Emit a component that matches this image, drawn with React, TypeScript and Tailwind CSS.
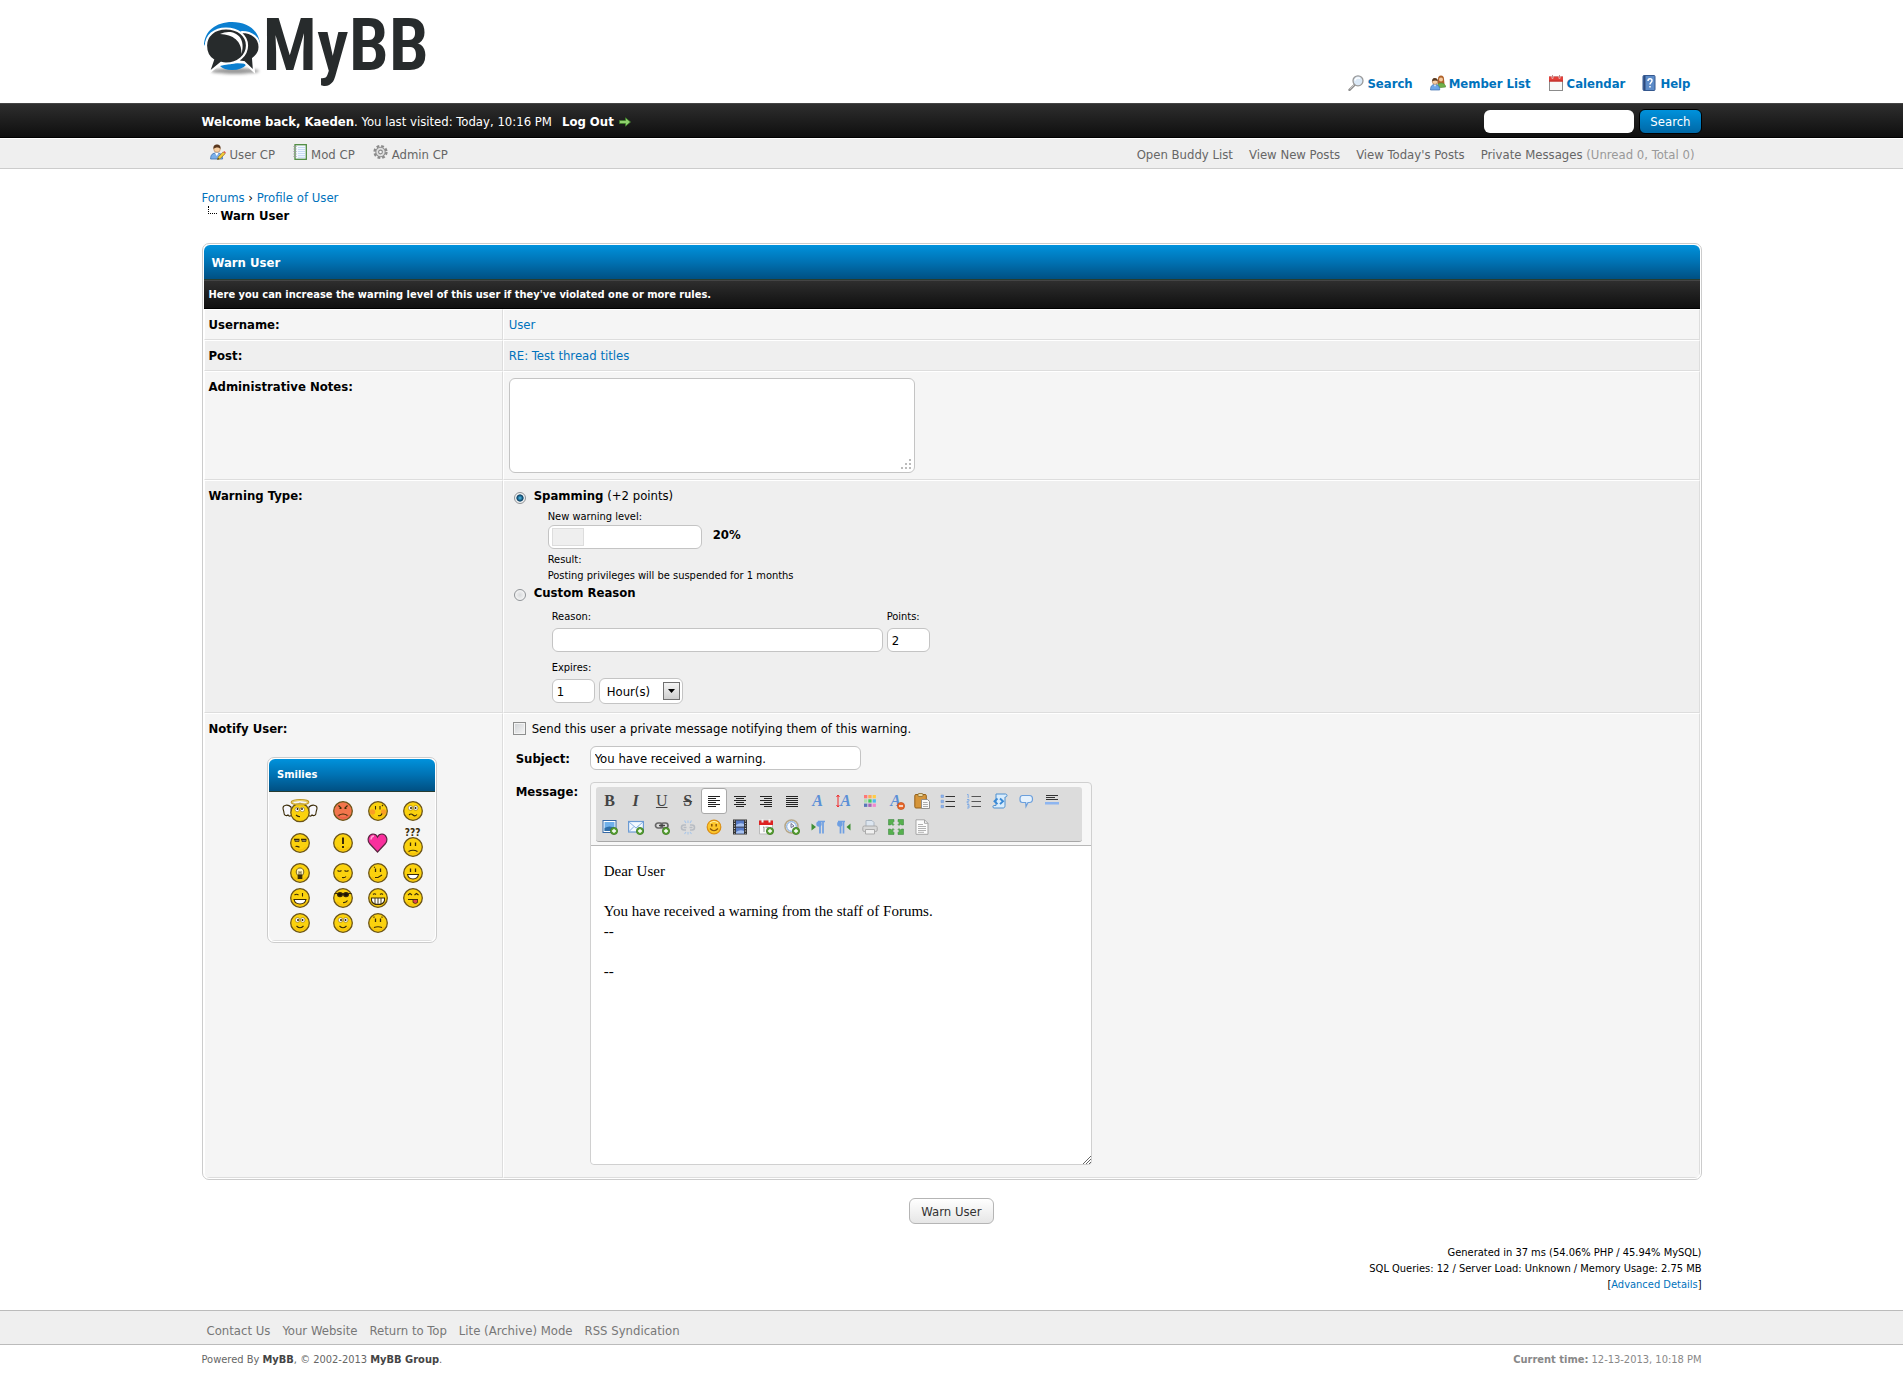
import React from 'react';
import type { ReactNode } from 'react';

const wrap = 'mx-auto w-[85%] max-w-[1500px]';
const inputBox = 'rounded-[6px] border border-[#c4c4c4] bg-white text-[13px] leading-[17px] text-black outline-none';

/* ---------- site logo ---------- */

function Logo() {
  return (
    <a href="#home" className="flex h-[75px] items-start text-[#272b2c]">
      <svg width="61" height="75" viewBox="7 0 61 75" aria-hidden="true">
        <defs>
          <filter id="soft" x="-20%" y="-100%" width="140%" height="300%">
            <feGaussianBlur stdDeviation="1.6" />
          </filter>
        </defs>
        <ellipse cx="40" cy="61" rx="24" ry="3" fill="#777" opacity=".75" filter="url(#soft)" />
        <path d="M9 36C9 21 21 12 37 12s28 9 28 24c-4-9-12-15-28-15S13 27 9 36z" fill="#0b7fd0" />
        <path d="M25 56q12-4 27-2-5 6-15 6-8 0-12-4z" fill="#0b7fd0" />
        <path d="M47 22c10 0 17.500 6 17.500 15 0 5-3 9-6.500 11.500l1 13-10-9.500c-5 0-9-3-12-7z" fill="#272b2c" stroke="#fff" strokeWidth="2" />
        <path d="M31 18.500c12 0 21 7 21 17S43 53.500 31 53.500c-2 0-3.500-.2-5-.6L13.500 63 18 50c-4.500-3-7-8-7-14.500C11 26 19 18.500 31 18.500z" fill="#272b2c" stroke="#fff" strokeWidth="2.200" />
        <path d="M25 24C37 18 52 25 46.500 44 47 31 38 24.500 25 24z" fill="#fff" />
      </svg>
      <span className="font-['Roboto_Condensed','Roboto',sans-serif] text-[72px] font-semibold leading-[72px]">MyBB</span>
    </a>
  );
}

/* ---------- small page icons ---------- */

function SearchIcon() {
  return (
    <svg width="16" height="16" viewBox="0 0 16 16" aria-hidden="true">
      <path d="M7 9.500L1.500 14.800" stroke="#8d8d8d" strokeWidth="2.400" strokeLinecap="round" />
      <path d="M6.500 9.500L1.800 14" stroke="#ddd" strokeWidth=".8" />
      <circle cx="10" cy="5.800" r="5" fill="#dbe9f7" stroke="#9a9a9a" strokeWidth="1.300" />
      <path d="M7 5.500A3.200 3.200 0 0 1 12 3.500" stroke="#fff" strokeWidth="1.400" fill="none" />
    </svg>
  );
}

function MembersIcon() {
  return (
    <svg width="16" height="16" viewBox="0 0 16 16" aria-hidden="true">
      <path d="M8 4a3 3.500 0 0 1 6 0l.5 5H7.500z" fill="#b0622a" />
      <circle cx="11" cy="4.500" r="2" fill="#f3c9a0" />
      <path d="M7 13c0-3.500 1.500-5 4-5s4.500 1.500 4.700 4z" fill="#6fb04a" stroke="#4f8a35" strokeWidth=".6" />
      <path d="M.5 15c0-4 1.500-5.500 4.500-5.500s4.700 1.500 4.700 5.500z" fill="#6ba5e7" stroke="#3c6fae" strokeWidth=".7" />
      <circle cx="5" cy="6.700" r="2.700" fill="#f6cfa5" stroke="#9a6234" strokeWidth=".5" />
      <path d="M2.200 6.500C2 3.500 3.500 3 5 3s3 .7 2.800 3.500C6.500 5 4 5 2.200 6.500z" fill="#5b3a20" />
      <path d="M4 9.700h2l-1 2z" fill="#fff" />
    </svg>
  );
}

function CalendarIcon() {
  return (
    <svg width="16" height="16" viewBox="0 0 16 16" aria-hidden="true">
      <rect x="1.500" y="2" width="13" height="13.500" fill="#f7f7f7" stroke="#8b8b8b" />
      <path d="M1 1.500h14v5H1z" fill="#e2403a" />
      <path d="M1 5.500h14v1H1z" fill="#b52a26" />
      <path d="M4.500 0v3.500M11.500 0v3.500" stroke="#fff" strokeWidth="1.600" />
      <path d="M4.500 0v3M11.500 0v3" stroke="#a55" strokeWidth=".7" />
    </svg>
  );
}

function HelpIcon() {
  return (
    <svg width="14" height="16" viewBox="0 0 14 16" aria-hidden="true">
      <rect x="1" y=".5" width="12" height="15" rx="1" fill="#5c8bc8" stroke="#35588f" />
      <path d="M2.500 1v14" stroke="#2d4a7c" strokeWidth="2" />
      <path d="M6 6c0-3 4-3 4-.5C10 7.500 8 7.500 8 9.500M8 11v1.500" stroke="#fff" strokeWidth="1.500" fill="none" />
    </svg>
  );
}

function UserEditIcon() {
  return (
    <svg width="16" height="16" viewBox="0 0 16 16" aria-hidden="true">
      <path d="M.6 15c0-4.500 2-6 6-6s6 1.500 6 6z" fill="#79aee8" stroke="#4073b0" strokeWidth=".8" />
      <path d="M5 9h3.500l-1.700 3z" fill="#fff" />
      <circle cx="7" cy="5" r="3.300" fill="#f7cfa2" stroke="#a4713f" strokeWidth=".5" />
      <path d="M3.500 5C3 1.500 5 .6 7 .6S11 1.500 10.500 5C9 3 5.500 3 3.500 5z" fill="#59371d" />
      <path d="M7.500 15.500l.8-2.600 5-5 1.800 1.800-5 5z" fill="#f6cf3b" stroke="#8f6b12" strokeWidth=".7" />
      <path d="M13.300 7.900l1-.9 1.600 1.600-.9 1z" fill="#e2574c" />
      <path d="M7.500 15.500l.5-1.500 1.200 1z" fill="#222" />
    </svg>
  );
}

function NotebookIcon() {
  return (
    <svg width="14" height="16" viewBox="0 0 14 16" aria-hidden="true">
      <rect x="2" y=".7" width="11.300" height="14.600" fill="#f3f8ff" stroke="#4d8a3e" strokeWidth="1.300" />
      <path d="M5 3.500h7M5 5.500h7M5 7.500h7M5 9.500h7M5 11.500h7M5 13.300h7" stroke="#bcd3f0" strokeWidth=".8" />
      <path d="M.5 2.500h3M.5 5h3M.5 7.500h3M.5 10h3M.5 12.500h3" stroke="#999" />
    </svg>
  );
}

function GearIcon() {
  return (
    <svg width="15" height="16" viewBox="0 0 16 16" aria-hidden="true">
      <circle cx="8" cy="8" r="6.300" fill="none" stroke="#8a8a8a" strokeWidth="2.600" strokeDasharray="2.900 2.050" />
      <circle cx="8" cy="8" r="5" fill="#e0e0e0" stroke="#8f8f8f" strokeWidth="1.100" />
      <circle cx="8" cy="8" r="2" fill="#f5f5f5" stroke="#8a8a8a" strokeWidth="1.200" />
    </svg>
  );
}

/* ---------- smilies ---------- */

const ink = '#3b2c08';

function Face({ children, angry }: { children?: ReactNode; angry?: boolean }) {
  return (
    <svg width="20" height="20" viewBox="0 0 20 20" fill="none" stroke={ink} strokeWidth="1.100" aria-hidden="true">
      <circle cx="10" cy="10" r="9.300" fill={angry ? '#f2764c' : '#fbd20e'} stroke="#6b5418" strokeWidth="1.300" />
      <path d="M4 14a7.500 7.500 0 0 0 12 0" stroke={angry ? '#e85246' : '#f3b80a'} strokeWidth="1.600" opacity=".6" />
      {children}
    </svg>
  );
}

const dots = <path d="M7.500 5.500v3.500M12.500 5.500v3.500" strokeWidth="1.300" />;

function Eyes() {
  return (
    <g>
      <circle cx="7.500" cy="7" r="2.300" fill="#fff" stroke="#6b5418" strokeWidth=".5" />
      <circle cx="12.700" cy="7" r="2.300" fill="#fff" stroke="#6b5418" strokeWidth=".5" />
      <path d="M8 6v2M12.500 6v2" strokeWidth="1.600" />
    </g>
  );
}

const smilies: { name: string; art: ReactNode }[] = [
  {
    name: 'Angel',
    art: (
      <svg width="36" height="24" viewBox="0 0 36 24" fill="none" stroke={ink} strokeWidth="1.100" aria-hidden="true">
        <path d="M9 8C6 5 1 6 1 9c0 2 1 3 1 5 0 3 3 3 4 2 1 2 4 1 4-1zM27 8c3-3 8-2 8 1 0 2-1 3-1 5 0 3-3 3-4 2-1 2-4 1-4-1z" fill="#f7f7fb" />
        <circle cx="18" cy="13.500" r="9.200" fill="#fbd20e" stroke="#6b5418" strokeWidth="1.300" />
        <ellipse cx="18" cy="3.200" rx="8.500" ry="2.200" stroke="#b8941e" strokeWidth="1.800" />
        <ellipse cx="18" cy="3.200" rx="8" ry="1.800" stroke="#fbe27a" strokeWidth=".8" />
        <circle cx="15.200" cy="10.500" r="2.200" fill="#fff" stroke="#6b5418" strokeWidth=".5" />
        <circle cx="20.300" cy="10.500" r="2.200" fill="#fff" stroke="#6b5418" strokeWidth=".5" />
        <path d="M15.500 9v2M20 9v2" strokeWidth="1.500" />
        <path d="M14 16q2 2 4 1.500" />
      </svg>
    ),
  },
  { name: 'Angry', art: <Face angry><path d="M5.500 4.500l3 3M14.500 4.500l-3 3M6.500 7.500h1.500M12 7.500h1.500M5.500 14.500Q10 11.500 14.500 14.500" /></Face> },
  {
    name: 'Blush',
    art: (
      <Face>
        <circle cx="4.500" cy="11" r="2.700" fill="#f9882f" opacity=".7" stroke="none" />
        <circle cx="15.500" cy="11" r="2.700" fill="#f9882f" opacity=".7" stroke="none" />
        <path d="M7.500 5v3.500M12 5v3.500M10 14.500q3 1 4-2M14 4l1 1" />
      </Face>
    ),
  },
  { name: 'Confused', art: <Face><Eyes /><path d="M6 14q2-2 4 0t4-.5" /></Face> },
  { name: 'Dodgy', art: <Face><path d="M4 6.500h5.500M11 6.500h5.500" strokeWidth="1.400" /><path d="M5 7.200h4v1.300H5zM12 7.200h4v1.300h-4z" fill="#fff" strokeWidth=".8" /><path d="M5.500 13.500q2-.5 4 .8" /></Face> },
  { name: 'Exclamation', art: <Face><path d="M10 4.500V11M10 13v2" strokeWidth="2" /></Face> },
  {
    name: 'Heart',
    art: (
      <svg width="21" height="20" viewBox="0 0 21 20" aria-hidden="true">
        <path d="M10.500 19L2.500 10.500C-.5 6.500 2 1 6 1c2.500 0 3.800 1.300 4.500 3C11.200 2.300 12.500 1 15 1c4 0 6.500 5.500 3.500 9.500z" fill="#f92f9d" stroke="#5b2540" strokeWidth="1.200" />
        <path d="M4 6.500C4.300 4 5.500 3 7 3" stroke="#ffa5d5" strokeWidth="1.500" fill="none" />
      </svg>
    ),
  },
  {
    name: 'Huh',
    art: (
      <span className="flex flex-col items-center">
        <span className="h-[9px] font-['DejaVu_Sans_Condensed',sans-serif] text-[10px] font-bold leading-[9px] text-[#3b2c08]">???</span>
        <Face>{dots}<path d="M5.500 14.500Q10 12 14.500 14.500" /></Face>
      </span>
    ),
  },
  {
    name: 'Idea',
    art: (
      <Face>
        <path d="M8 12.500C5 10 6 5 10 5s5 5 2 7.500z" fill="#fff6c0" strokeWidth=".7" />
        <path d="M8.200 12h3.600v3.500H8.200z" fill={ink} />
        <path d="M9 12V8.500l1 1 1-1V12" strokeWidth=".7" />
      </Face>
    ),
  },
  { name: 'Sleepy', art: <Face><path d="M4.500 7.500q2 1.500 4 0M11.500 7.500q2 1.500 4 0M9 14.500q3 .5 4-1" /></Face> },
  { name: 'Undecided', art: <Face>{dots}<path d="M6 4.500l1-.5M7 14.500h3l4-2.500" /></Face> },
  { name: 'Smile', art: <Face>{dots}<path d="M4.500 11.500h11q-1 4.500-5.500 4.500t-5.500-4.500z" fill="#fff" /></Face> },
  { name: 'Wink', art: <Face><path d="M4.500 7q2-1.500 4 0M12.500 5v3.500" /><path d="M4 11.500h12q-1 4.500-6 4.500t-6-4.500z" fill="#fff" /></Face> },
  { name: 'Cool', art: <Face><path d="M1.500 5.500h17" /><ellipse cx="7" cy="6.600" rx="2.500" ry="2" fill="#1b1405" /><ellipse cx="13" cy="6.600" rx="2.500" ry="2" fill="#1b1405" /><path d="M10 14.500q3 .5 4.500-2" /></Face> },
  { name: 'Big grin', art: <Face><path d="M5 6.500q1.500-1.500 3 0M12 6.500q1.500-1.500 3 0" /><path d="M3.500 10h13v2.500q-1 4-6.500 4t-6.500-4z" fill="#fff" /><path d="M7 10v5.500M10 10v6M13 10v5.500" strokeWidth=".9" /></Face> },
  { name: 'Tongue', art: <Face><path d="M5 7l2-1.500L9 7M11.500 7l2-1.500 2 1.500M5 11.500h10" /><path d="M10 11.500h4.500v3q-2 2-4.500 0z" fill="#e4444b" strokeWidth=".8" /></Face> },
  { name: 'Rolleyes', art: <Face><Eyes /><path d="M6.500 13q3.500 3.500 7 0" /></Face> },
  { name: 'Shy', art: <Face><Eyes /><path d="M6.500 13q3.500 3.500 7 0" /></Face> },
  { name: 'Sad', art: <Face>{dots}<path d="M5.500 4.500l1-.7M14.500 4.500l-1-.7M6 14.500q4-1.500 8 0" /></Face> },
];

/* ---------- editor toolbar icons ---------- */

function Icon({ children }: { children: ReactNode }) {
  return <svg width="16" height="16" viewBox="0 0 16 16" fill="none" aria-hidden="true">{children}</svg>;
}

function Plus() {
  return (
    <g>
      <circle cx="12" cy="12" r="3.600" fill="#5aa336" stroke="#3c7a20" strokeWidth=".8" />
      <path d="M12 10v4M10 12h4" stroke="#fff" strokeWidth="1.300" />
    </g>
  );
}

const glyph = "font-['Liberation_Serif',serif] text-[16px] leading-[16px] text-[#444]";
const blueA = "font-['Liberation_Serif',serif] text-[16px] leading-[16px] font-black italic text-[#5b8fd6]";

const lines = (rows: string) => (
  <Icon><path d={rows} stroke="#222" strokeWidth="1" /></Icon>
);

const tools: { label: string; art: ReactNode }[][] = [
  [
    { label: 'Bold', art: <span className={`${glyph} font-bold`}>B</span> },
    { label: 'Italic', art: <span className={`${glyph} font-bold italic`}>I</span> },
    { label: 'Underline', art: <span className={`${glyph} underline`}>U</span> },
    { label: 'Strikethrough', art: <span className={`${glyph} font-bold line-through`}>S</span> },
    { label: 'Align left', art: lines('M2 3.500h12M2 5.500h8M2 7.500h12M2 9.500h8M2 11.500h12M2 13.500h8') },
    { label: 'Center', art: lines('M2 3.500h12M4 5.500h8M2 7.500h12M4 9.500h8M2 11.500h12M4 13.500h8') },
    { label: 'Align right', art: lines('M2 3.500h12M6 5.500h8M2 7.500h12M6 9.500h8M2 11.500h12M6 13.500h8') },
    { label: 'Justify', art: lines('M2 3.500h12M2 5.500h12M2 7.500h12M2 9.500h12M2 11.500h12M2 13.500h12') },
    { label: 'Font name', art: <span className={blueA}>A</span> },
    {
      label: 'Font size',
      art: (
        <span className="flex items-center">
          <svg width="4" height="14" viewBox="0 0 4 14" aria-hidden="true"><path d="M2 1v12M.5 3L2 1l1.500 2M.5 11L2 13l1.500-2" stroke="#f02b2b" fill="none" /></svg>
          <span className={blueA}>A</span>
        </span>
      ),
    },
    {
      label: 'Font color',
      art: (
        <Icon>
          <path d="M2 2h3.300v3.300H2z" fill="#f77" /><path d="M6.300 2h3.300v3.300H6.300z" fill="#fa5" /><path d="M10.600 2h3.300v3.300h-3.300z" fill="#fc4" />
          <path d="M2 6.300h3.300v3.300H2z" fill="#aedfae" /><path d="M6.300 6.300h3.300v3.300H6.300z" fill="#3ecb5a" /><path d="M10.600 6.300h3.300v3.300h-3.300z" fill="#4bb9ee" />
          <path d="M2 10.600h3.300v3.300H2z" fill="#5a76b8" /><path d="M6.300 10.600h3.300v3.300H6.300z" fill="#a565b5" /><path d="M10.600 10.600h3.300v3.300h-3.300z" fill="#f286cc" />
        </Icon>
      ),
    },
    {
      label: 'Remove formatting',
      art: (
        <span className="relative">
          <span className={blueA}>A</span>
          <svg className="absolute -right-1 bottom-0" width="8" height="8" viewBox="0 0 8 8" aria-hidden="true"><circle cx="4" cy="4" r="3.600" fill="#e8672a" stroke="#b8430f" strokeWidth=".6" /><path d="M2 4h4" stroke="#fff" strokeWidth="1.400" /></svg>
        </span>
      ),
    },
    {
      label: 'Paste text',
      art: (
        <Icon>
          <rect x=".8" y="1.500" width="11.500" height="13.500" rx="1.200" fill="#d5953a" stroke="#94601a" />
          <rect x="4" y=".5" width="5" height="3" rx="1" fill="#e9d9a8" stroke="#8c6a2c" strokeWidth=".8" />
          <path d="M7.500 6.500h6l2 2v7h-8z" fill="#fafafa" stroke="#888" strokeWidth=".9" />
          <path d="M9 9.500h4.500M9 11.500h5M9 13.500h5" stroke="#999" strokeWidth=".8" />
        </Icon>
      ),
    },
    { label: 'Bullet list', art: <Icon><path d="M5.500 3.500H15M5.500 8.500H15M5.500 13.500H15" stroke="#333" /><path d="M1 2h2.500v2.500H1zM1 7.200h2.500v2.500H1zM1 12.300h2.500v2.500H1z" fill="#8ab1ea" stroke="#6c97d8" strokeWidth=".5" /></Icon> },
    { label: 'Numbered list', art: <Icon><path d="M5.500 3.500H15M5.500 8.500H15M5.500 13.500H15" stroke="#555" /><path d="M1 1.500h1.200V5M1 6.500h2v1.700H1.200V10H3M1 11.500h2v3.500H1M1.500 13.200H3" stroke="#7aa8e4" strokeWidth=".9" /></Icon> },
    {
      label: 'Code',
      art: (
        <Icon>
          <path d="M4 1h9.500c2 0 2 3 0 3H13v8.500c0 2-1 2.500-2 2.500H2c-1.500 0-1.500-2.500 0-2.500h2z" fill="#d8ecfc" stroke="#4f90cf" />
          <path d="M5.500 5.500L2.500 8.300l3 2.800M8 5.500l3 2.800-3 2.800" stroke="#3a8ad6" strokeWidth="1.900" />
        </Icon>
      ),
    },
    { label: 'Quote', art: <Icon><path d="M4.500 2.500h7C14 2.500 14.500 4 14.500 6s-.5 3.500-3 3.500H10L8 13.500l-.3-4H4.500C2 9.500 2 8 2 6s.2-3.500 2.500-3.500z" fill="#e6f2fd" stroke="#6b9fdc" strokeWidth="1.200" /></Icon> },
    { label: 'Horizontal rule', art: <Icon><path d="M2 2.500h12M2 4.500h9M2 6.500h12" stroke="#333" /><path d="M1 9h14v2.500H1z" fill="#8db5f0" /></Icon> },
  ],
  [
    {
      label: 'Insert image',
      art: <Icon><rect x="1" y="1.500" width="13" height="12" fill="#fff" stroke="#3568a5" /><path d="M2.500 3h10v9h-10z" fill="#6fb0ea" /><path d="M2.500 9q5-3 10 0v3h-10z" fill="#2f6ea8" /><Plus /></Icon>,
    },
    { label: 'Insert email', art: <Icon><rect x=".6" y="2.500" width="14.800" height="10.500" fill="#f3f9ff" stroke="#6b9ad2" strokeWidth="1.200" /><path d="M1 3l7 6 7-6M1 12.500l5-5M15 12.500l-5-5" stroke="#86b0e2" /><Plus /></Icon> },
    { label: 'Insert link', art: <Icon><rect x="1.500" y="4" width="7" height="5" rx="2.500" stroke="#666" strokeWidth="1.700" /><rect x="7" y="4" width="7" height="5" rx="2.500" stroke="#666" strokeWidth="1.700" /><path d="M5 6.500h6" stroke="#444" strokeWidth="1.400" /><Plus /></Icon> },
    { label: 'Unlink', art: <Icon><path d="M6 6H4a2.500 2.500 0 0 0 0 5h2M10 6h2a2.500 2.500 0 0 1 0 5h-2M3.500 8.500h3M9.500 8.500h3" stroke="#b7bcc3" strokeWidth="1.600" /><path d="M6 4L4.500 1.500M8 4V1.500M10 4l1.500-2.500M6 13l-1.500 2M8 13v2.500M10 13l1.500 2" stroke="#a8c6ea" strokeWidth="1.100" /></Icon> },
    { label: 'Emoticon', art: <Icon><circle cx="8" cy="8" r="6.800" fill="#fcc62b" stroke="#dc8f12" strokeWidth="1.200" /><path d="M5.800 5v2.500M10.200 5v2.500" stroke="#8a5508" strokeWidth="1.500" /><path d="M4 9.500q4 4.500 8 0" stroke="#8a5508" strokeWidth="1.200" /><path d="M4 4q4-3 8 0" stroke="#fff0a0" strokeWidth="1.200" /></Icon> },
    {
      label: 'Video',
      art: (
        <Icon>
          <path d="M1 .5h14v15H1z" fill="#333" />
          <path d="M4 1.500h8v6H4zM4 8.500h8v6H4z" fill="#5679c4" /><path d="M4 6q4-3 8-1v2.500H4zM4 13q4-3 8-1v2.500H4z" fill="#a8c2f0" />
          <path d="M2.500 1.500v13M13.500 1.500v13" stroke="#ccc" strokeWidth="1.200" strokeDasharray="1 1.500" />
        </Icon>
      ),
    },
    {
      label: 'Date',
      art: (
        <Icon>
          <path d="M1.500 2h13v13h-13z" fill="#fbfbfb" stroke="#bbb" />
          <path d="M1 1.500h14V6H1z" fill="#dd2222" /><path d="M4.500 0v3.500M11.500 0v3.500" stroke="#eee" strokeWidth="2" />
          <path d="M5 8.500l1-.6V13M7.500 8.200h3L8.500 13" stroke="#888" strokeWidth=".9" /><Plus />
        </Icon>
      ),
    },
    { label: 'Time', art: <Icon><circle cx="7.500" cy="7.500" r="6.500" fill="#f4f8fd" stroke="#b5a688" strokeWidth="1.500" /><circle cx="7.500" cy="7.500" r="4.800" stroke="#6f9fdb" strokeWidth="1" /><path d="M7 4.500v4l3-1.500z" stroke="#557" strokeWidth=".8" /><Plus /></Icon> },
    { label: 'Left to right', art: <Icon><path d="M1.500 4.500v7L6 8z" fill="#3e8f35" /><path d="M8 2.500h7M10 3v11.500M13 3v11.500" stroke="#6e9fe2" strokeWidth="1.700" /><circle cx="9" cy="5" r="2.700" fill="#6e9fe2" /></Icon> },
    { label: 'Right to left', art: <Icon><path d="M14.500 4.500v7L10.500 8z" fill="#3e8f35" /><path d="M2 2.500h7M4.500 3v11.500M7.500 3v11.500" stroke="#6e9fe2" strokeWidth="1.700" /><circle cx="3.800" cy="5" r="2.700" fill="#6e9fe2" /></Icon> },
    {
      label: 'Print',
      art: <Icon><path d="M4 7V1.500h6l2 2V7" fill="#dde6f0" stroke="#aab5c2" /><rect x=".8" y="7" width="14.400" height="5.500" rx="1.500" fill="#d8d8d8" stroke="#a9a9a9" /><path d="M3.500 10.500h9v4.500h-9z" fill="#f0f0f0" stroke="#aaa" /></Icon>,
    },
    {
      label: 'Maximize',
      art: (
        <Icon>
          <path d="M.5.500h5.500v2L4.500 4 6 5.500 5 6.500 3.500 5l-1 1h-2zM15.500.5H10v2L11.500 4 10 5.500l1 1L12.500 5l1 1h2zM.5 15.500H6v-2L4.500 12 6 10.500l-1-1L3.500 11l-1-1h-2zM15.500 15.500H10v-2l1.500-1.500-1.500-1.500 1-1 1.500 1.500 1-1h2z" fill="#56b04e" stroke="#35803a" strokeWidth=".5" />
        </Icon>
      ),
    },
    { label: 'View source', art: <Icon><path d="M2 .8h8.500L14 4.300v11H2z" fill="#fcfcfc" stroke="#a5a5a5" /><path d="M10.500.8v3.500H14" stroke="#a5a5a5" /><path d="M4 5.500h5M4 7.500h8M4 9.500h8M4 11.500h8M4 13.300h6" stroke="#aaa" strokeWidth=".9" /></Icon> },
  ],
];

function Editor() {
  return (
    <div className="w-[502px] rounded-[4px] border border-[#d0d0d0] bg-[#f7f7f7]">
      <div className="mt-[4px] mr-[9px] mb-[3px] ml-[5px] rounded-[3px] border-b border-[#a8a8a8] bg-[#dcdcdc] p-px">
        {tools.map((row, i) => (
          <div key={i} className="flex">
            {row.map((t) => (
              <button
                key={t.label}
                type="button"
                aria-label={t.label}
                className={
                  t.label === 'Align left'
                    ? 'flex size-[26px] items-center justify-center rounded-[3px] border border-[#a9a9a9] bg-white'
                    : 'flex size-[26px] items-center justify-center'
                }
              >
                {t.art}
              </button>
            ))}
          </div>
        ))}
      </div>
      <div className="relative border-t border-[#b8b8b8]">
        <textarea
          id="message"
          className="block h-[318px] w-full resize-none rounded-b-[4px] bg-white px-[13px] pt-[15px] font-['Liberation_Serif',serif] text-[15px] leading-[20px] text-black outline-none"
          defaultValue={'Dear User\n\nYou have received a warning from the staff of Forums.\n--\n\n--'}
        />
        <svg className="absolute right-0 bottom-0" width="9" height="9" viewBox="0 0 9 9" aria-hidden="true">
          <path d="M1 9l8-8M4 9l5-5M7 9l2-2" stroke="#555" strokeWidth=".9" />
        </svg>
      </div>
    </div>
  );
}

function Smilies() {
  return (
    <div className="mx-auto mt-[20px] w-[170px] rounded-[7px] border border-[#ccc] bg-white p-px">
      <div className="overflow-hidden rounded-[6px]">
        <h2 className="h-[33px] border-b border-[#263c30] bg-linear-to-b from-[#0092dc] via-[#0072b3] to-[#005083] px-2 text-[11px] leading-[32px] font-bold text-white">Smilies</h2>
        <div className="border-b border-[#ddd] bg-[#f5f5f5] px-[5px] pt-[5px] pb-[5px]">
          <div className="grid grid-cols-[51px_35px_35px_35px] grid-rows-[28px_35px_25px_25px_25px]">
            {smilies.map((s) => (
              <button key={s.name} type="button" aria-label={s.name} className="flex items-center justify-center">{s.art}</button>
            ))}
          </div>
        </div>
      </div>
    </div>
  );
}

/* ---------- form rows ---------- */

function Row({ label, shade, extra, children }: { label: string; shade?: boolean; extra?: ReactNode; children: ReactNode }) {
  const cell = shade ? 'bg-[#efefef]' : 'bg-[#f5f5f5]';
  return (
    <tr className={cell}>
      <th scope="row" className="w-1/5 border border-t-white border-r-[#ddd] border-b-[#ddd] border-l-white py-[6px] pr-[6px] pl-[4px] text-left align-top leading-[17px] font-bold">
        {label}
        {extra}
      </th>
      <td className="border border-t-white border-r-[#ddd] border-b-[#ddd] border-l-white px-[5px] py-[6px] align-top leading-[17px]">{children}</td>
    </tr>
  );
}

const radio =
  "mt-[5px] size-[12px] shrink-0 appearance-none rounded-full border border-[#8f9397] bg-[radial-gradient(circle,#d8dadc_0,#f6f6f6_75%)] checked:bg-[radial-gradient(circle,#4fc3f0_0,#124a6e_40%,#124a6e_46%,#f2f2f2_56%)]";
const small = 'text-[11px] leading-4';
const link = 'text-[#0072bc]';

function WarningType() {
  return (
    <div className="pb-0.5">
      <div className="flex gap-2 pl-[5px]">
        <input type="radio" name="type" id="spamming" defaultChecked className={radio} />
        <label htmlFor="spamming"><b>Spamming</b> (+2 points)</label>
      </div>
      <div className="mt-[5px] pl-[39px]">
        <div className={small}>New warning level:</div>
        <div className="flex items-center gap-[11px]">
          <div className="h-6 w-[154px] rounded-[6px] border border-[#c4c4c4] bg-white px-[3px] py-[2px]">
            <div className="h-[18px] w-[32px] border border-[#ddd] bg-[#efefef]" />
          </div>
          <b className="pb-1.5">20%</b>
        </div>
        <div className={`${small} mt-[3px]`}>Result:<br />Posting privileges will be suspended for 1 months</div>
      </div>
      <div className="flex gap-2 pl-[5px]">
        <input type="radio" name="type" id="custom" className={radio} />
        <label htmlFor="custom" className="font-bold">Custom Reason</label>
      </div>
      <div className="mt-2 flex gap-[4px] pl-[43px]">
        <div className="w-[331px]">
          <label htmlFor="reason" className={`${small} block`}>Reason:</label>
          <input id="reason" type="text" className={`${inputBox} mt-[3px] block h-6 w-full px-1`} />
        </div>
        <div>
          <label htmlFor="points" className={`${small} block`}>Points:</label>
          <input id="points" type="text" defaultValue="2" className={`${inputBox} mt-[3px] block h-6 w-[43px] px-1`} />
        </div>
      </div>
      <div className="mt-2 pl-[43px]">
        <label htmlFor="expires" className={`${small} block`}>Expires:</label>
        <div className="mt-[2px] flex items-center gap-[4px]">
          <input id="expires" type="text" defaultValue="1" className={`${inputBox} block h-6 w-[43px] px-1`} />
          <div className="relative">
            <select aria-label="Expiry unit" className={`${inputBox} block h-[26px] w-[84px] appearance-none pl-[7px]`}>
              <option>Hour(s)</option>
              <option>Day(s)</option>
              <option>Week(s)</option>
              <option>Month(s)</option>
              <option>Never</option>
            </select>
            <span className="pointer-events-none absolute top-[4px] right-[3px] flex h-[18px] w-[17px] items-center justify-center border border-[#707070] bg-linear-to-b from-[#f4f4f4] to-[#cfcfcf]">
              <svg width="7" height="4" viewBox="0 0 7 4" aria-hidden="true"><path d="M0 0h7L3.500 4z" /></svg>
            </span>
          </div>
        </div>
      </div>
    </div>
  );
}

function Notify() {
  return (
    <div className="pb-[6px]">
      <div className="flex items-center gap-[6px] pl-[4px]">
        <input type="checkbox" id="pm" className="size-[13px] appearance-none border border-[#8e8f8f] bg-linear-to-br from-[#cfd2d5] to-[#f6f6f6] shadow-[inset_0_0_0_1px_#f4f4f4] checked:bg-[#124a6e]" />
        <label htmlFor="pm">Send this user a private message notifying them of this warning.</label>
      </div>
      <div className="mt-[9px] grid grid-cols-[74px_1fr] gap-y-3 pl-[7px]">
        <label htmlFor="subject" className="self-center font-bold">Subject:</label>
        <input id="subject" type="text" defaultValue="You have received a warning." className={`${inputBox} h-6 w-[271px] px-[4px]`} />
        <label htmlFor="message" className="pt-px font-bold">Message:</label>
        <Editor />
      </div>
    </div>
  );
}

/* ---------- page ---------- */

export default function App() {
  return (
    <div className="min-h-screen bg-white font-['DejaVu_Sans_Condensed','Noto_Sans',sans-serif] text-[13px] leading-[17px] text-black">
      <header>
        <div className={`${wrap} flex h-[103px] justify-between pt-[10px]`}>
          <Logo />
          <nav className="mt-[65px] flex h-[17px] items-center gap-[17px] pr-[11px] font-bold text-[#0072bc]">
            <a href="#search" className="flex gap-[3px]"><SearchIcon />Search</a>
            <a href="#members" className="flex gap-[3px]"><MembersIcon />Member List</a>
            <a href="#calendar" className="flex gap-[3px]"><CalendarIcon />Calendar</a>
            <a href="#help" className="flex gap-[4px]"><HelpIcon />Help</a>
          </nav>
        </div>
        <div className="h-[35px] border-t border-b border-t-[#444] border-b-black bg-linear-to-b from-[#2e2e2e] to-[#0f0f0f]">
          <div className={`${wrap} flex h-full items-center justify-between pt-[2px] text-white`}>
            <div className="flex items-center">
              <span><b>Welcome back, Kaeden</b>. You last visited: Today, 10:16 PM</span>
              <a href="#logout" className="ml-[10px] flex items-center gap-[5px] font-bold">
                Log Out
                <svg width="12" height="10" viewBox="0 0 12 10" aria-hidden="true">
                  <path d="M.5 3.500h6V.8L11.500 5 6.500 9.200V6.500h-6z" fill="#8ed16c" stroke="#3c7d28" strokeWidth=".8" />
                </svg>
              </a>
            </div>
            <form className="flex items-center gap-[5px]" onSubmit={(e) => e.preventDefault()}>
              <input type="text" aria-label="Search keywords" className="h-[23px] w-[150px] rounded-[6px] bg-white px-1 text-[13px] text-black outline-none" />
              <button type="submit" className="h-[25px] rounded-[6px] border border-black bg-linear-to-b from-[#0092dc] to-[#0068a6] px-[10px] text-[13px] leading-[17px] text-white">Search</button>
            </form>
          </div>
        </div>
        <div className="h-[31px] border-t border-b border-t-white border-b-[#ccc] bg-[#efefef] text-[#666]">
          <div className={`${wrap} flex justify-between pt-[5px] pr-[7px] pl-[8px]`}>
            <nav className="flex gap-[18px]">
              <a href="#usercp" className="flex gap-[4px]"><UserEditIcon /><span className="pt-[2px]">User CP</span></a>
              <a href="#modcp" className="flex gap-[4px]"><NotebookIcon /><span className="pt-[2px]">Mod CP</span></a>
              <a href="#admincp" className="flex gap-[4px]"><GearIcon /><span className="pt-[2px]">Admin CP</span></a>
            </nav>
            <nav className="flex gap-[16px] pt-[2px]">
              <a href="#buddies">Open Buddy List</a>
              <a href="#new">View New Posts</a>
              <a href="#today">View Today's Posts</a>
              <span><a href="#pm">Private Messages</a> <span className="text-[#999]">(Unread 0, Total 0)</span></span>
            </nav>
          </div>
        </div>
      </header>

      <main className={wrap}>
        <nav aria-label="Breadcrumb" className="pt-[20px]">
          <div><a href="#forums" className={link}>Forums</a> › <a href="#profile" className={link}>Profile of User</a></div>
          <div className="flex gap-[4px] pl-[6px]">
            <span className="h-[8px] w-[9px] border-b border-l border-dotted border-black" />
            <span className="pt-px font-bold">Warn User</span>
          </div>
        </nav>

        <form onSubmit={(e) => e.preventDefault()}>
          <div className="mt-[19px] rounded-[7px] border border-[#ccc] bg-white p-px">
            <div className="overflow-hidden rounded-[6px]">
              <table className="w-full border-separate border-spacing-0">
                <thead>
                  <tr>
                    <th colSpan={2} className="h-[35px] border-b border-[#263c30] bg-linear-to-b from-[#0092dc] via-[#0072b3] to-[#005083] px-[8px] text-left font-bold text-white">Warn User</th>
                  </tr>
                  <tr>
                    <th colSpan={2} className="h-[29px] border-t border-b border-t-[#444] border-b-black bg-linear-to-b from-[#2e2e2e] to-[#101010] px-[5px] text-left text-[11px] font-bold text-white">
                      Here you can increase the warning level of this user if they've violated one or more rules.
                    </th>
                  </tr>
                </thead>
                <tbody>
                  <Row label="Username:"><a href="#user" className={link}>User</a></Row>
                  <Row label="Post:" shade><a href="#post" className={link}>RE: Test thread titles</a></Row>
                  <Row label="Administrative Notes:">
                    <div className="relative w-[406px]">
                      <textarea aria-label="Administrative Notes" className={`${inputBox} block h-[95px] w-full resize-none p-1`} />
                      <svg className="absolute right-[3px] bottom-[3px]" width="11" height="11" viewBox="0 0 11 11" fill="#bbb" aria-hidden="true">
                        <path d="M8 0h2v2H8zM4 4h2v2H4zM8 4h2v2H8zM0 8h2v2H0zM4 8h2v2H4zM8 8h2v2H8z" />
                      </svg>
                    </div>
                  </Row>
                  <Row label="Warning Type:" shade><WarningType /></Row>
                  <Row label="Notify User:" extra={<Smilies />}><Notify /></Row>
                </tbody>
              </table>
            </div>
          </div>
          <div className="mt-[18px] flex justify-center">
            <button type="submit" className="h-[26px] rounded-[6px] border border-[#b5b5b5] bg-linear-to-b from-white to-[#e6e6e6] px-[11px] text-[13px] leading-[17px] text-[#333]">Warn User</button>
          </div>
        </form>

        <div className="mt-[21px] pb-[17px] text-right text-[11px] leading-4">
          Generated in 37 ms (54.06% PHP / 45.94% MySQL)<br />
          SQL Queries: 12 / Server Load: Unknown / Memory Usage: 2.75 MB<br />
          [<a href="#details" className={link}>Advanced Details</a>]
        </div>
      </main>

      <footer>
        <div className="border-t border-b border-[#bbb] bg-[#efefef] text-[#777]">
          <nav className={`${wrap} flex gap-[12px] pt-[11px] pb-[5px] pl-[5px]`}>
            <a href="#contact">Contact Us</a>
            <a href="#website">Your Website</a>
            <a href="#top">Return to Top</a>
            <a href="#lite">Lite (Archive) Mode</a>
            <a href="#rss">RSS Syndication</a>
          </nav>
        </div>
        <div className={`${wrap} flex justify-between pt-[7px] text-[11px] leading-4 text-[#666]`}>
          <span>Powered By <a href="#mybb" className="font-bold text-[#444]">MyBB</a>, © 2002-2013 <a href="#group" className="font-bold text-[#444]">MyBB Group</a>.</span>
          <span className="text-[#888]"><b>Current time:</b> 12-13-2013, 10:18 PM</span>
        </div>
      </footer>
    </div>
  );
}
